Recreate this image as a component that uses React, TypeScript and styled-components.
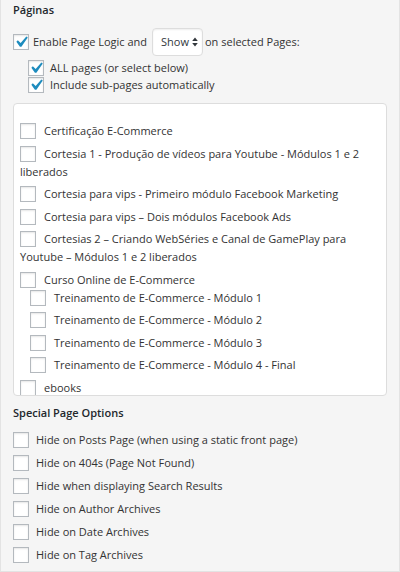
import styled, { createGlobalStyle } from "styled-components";

const GlobalStyle = createGlobalStyle`
  html, body {
    margin: 0;
    padding: 0;
    background: #f5f5f5;
  }
  body {
    font-family: "Open Sans", "Liberation Sans", sans-serif;
    font-size: 11px;
    color: #333;
  }
`;

const Widget = styled.div`
  box-sizing: border-box;
  width: 400px;
  height: 572px;
  padding: 0 12px;
  background: #f5f5f5;
  border: 1px solid #e3e3e3;
  border-top: none;
  overflow: hidden;
`;

const Heading = styled.h4<{ $gap?: number }>`
  margin: ${({ $gap }) => $gap || 0}px 0 0;
  font-size: 11px;
  font-weight: 600;
  line-height: 20px;
  color: #23282d;
`;

const Row = styled.label<{ $indent?: number; $height?: number; $gap?: number; $labelGap?: number }>`
  display: flex;
  align-items: center;
  gap: ${({ $labelGap }) => $labelGap || 4}px;
  height: ${({ $height }) => $height || 23}px;
  margin-left: ${({ $indent }) => $indent || 0}px;
  margin-top: ${({ $gap }) => $gap || 0}px;
  line-height: 18px;
  white-space: nowrap;
`;

const Box = styled.span<{ $inline?: boolean }>`
  position: relative;
  box-sizing: border-box;
  display: inline-block;
  flex: none;
  width: 16px;
  height: 16px;
  border: 1px solid #b4b9be;
  background: #fff;
  box-shadow: inset 0 1px 2px rgba(0, 0, 0, 0.1);
  vertical-align: ${({ $inline }) => ($inline ? "-4px" : "middle")};
  margin-right: ${({ $inline }) => ($inline ? "8px" : "0")};
`;

const Tick = styled.svg`
  position: absolute;
  left: -4px;
  top: -4px;
  width: 22px;
  height: 22px;
`;

const Check = ({ checked, inline }: { checked?: boolean; inline?: boolean }) => (
  <Box $inline={inline}>
    {checked && (
      <Tick viewBox="0 0 20 20">
        <path fill="#1e8cbe" d="M14.83 4.89l1.34.94-5.81 8.38H9.02L5.78 9.67l1.34-1.25 2.57 2.4z" />
      </Tick>
    )}
  </Box>
);

const Select = styled.span`
  box-sizing: border-box;
  display: inline-flex;
  align-items: center;
  gap: 3px;
  height: 28px;
  margin: 0 -2px 0 1px;
  padding: 0 4px 0 8px;
  background: #fff;
  border: 1px solid #ddd;
  border-radius: 4px;
  box-shadow: inset 0 1px 2px rgba(0, 0, 0, 0.07);
  color: #32373c;
`;

const Panel = styled.div`
  box-sizing: border-box;
  height: 293px;
  margin-top: 10px;
  padding: 18px 6px 0;
  background: #fff;
  border: 1px solid #ddd;
  border-radius: 4px;
  overflow: hidden;
`;

const List = styled.ul<{ $indent?: number; $gap?: number }>`
  list-style: none;
  margin: ${({ $gap }) => $gap || 0}px 0 0 ${({ $indent }) => $indent || 0}px;
  padding: 0;
`;

const Item = styled.li`
  margin: 0 0 4.5px;
  line-height: 18px;
`;

const pages: { title: string; children?: string[] }[] = [
  { title: "Certificação E-Commerce" },
  { title: "Cortesia 1 - Produção de vídeos para Youtube - Módulos 1 e 2 liberados" },
  { title: "Cortesia para vips - Primeiro módulo Facebook Marketing" },
  { title: "Cortesia para vips – Dois módulos Facebook Ads" },
  { title: "Cortesias 2 – Criando WebSéries e Canal de GamePlay para Youtube – Módulos 1 e 2 liberados" },
  {
    title: "Curso Online de E-Commerce",
    children: [
      "Treinamento de E-Commerce - Módulo 1",
      "Treinamento de E-Commerce - Módulo 2",
      "Treinamento de E-Commerce - Módulo 3",
      "Treinamento de E-Commerce - Módulo 4 - Final",
    ],
  },
  { title: "ebooks" },
];

const special = [
  "Hide on Posts Page (when using a static front page)",
  "Hide on 404s (Page Not Found)",
  "Hide when displaying Search Results",
  "Hide on Author Archives",
  "Hide on Date Archives",
  "Hide on Tag Archives",
];

export default function App() {
  return (
    <Widget>
      <GlobalStyle />
      <Heading>Páginas</Heading>
      <Row $height={28} $gap={8}>
        <Check checked />
        Enable Page Logic and
        <Select>
          Show
          <svg width="6" height="10" viewBox="0 0 6 10">
            <path fill="#32373c" d="M3 0.5L5.8 4H0.2z M3 9.5L0.2 6h5.6z" />
          </svg>
        </Select>
        on selected Pages:
      </Row>
      <Row $indent={15} $height={17} $gap={3} $labelGap={6}>
        <Check checked />
        ALL pages (or select below)
      </Row>
      <Row $indent={15} $height={17} $labelGap={6}>
        <Check checked />
        Include sub-pages automatically
      </Row>
      <Panel>
        <List>
          {pages.map((p) => (
            <Item key={p.title}>
              <Check inline />
              {p.title}
              {p.children && (
                <List $indent={10}>
                  {p.children.map((c) => (
                    <Item key={c}>
                      <Check inline />
                      {c}
                    </Item>
                  ))}
                </List>
              )}
            </Item>
          ))}
        </List>
      </Panel>
      <Heading $gap={7}>Special Page Options</Heading>
      <List $gap={5}>
        {special.map((s) => (
          <li key={s}>
            <Row $labelGap={7}>
              <Check />
              {s}
            </Row>
          </li>
        ))}
      </List>
    </Widget>
  );
}
